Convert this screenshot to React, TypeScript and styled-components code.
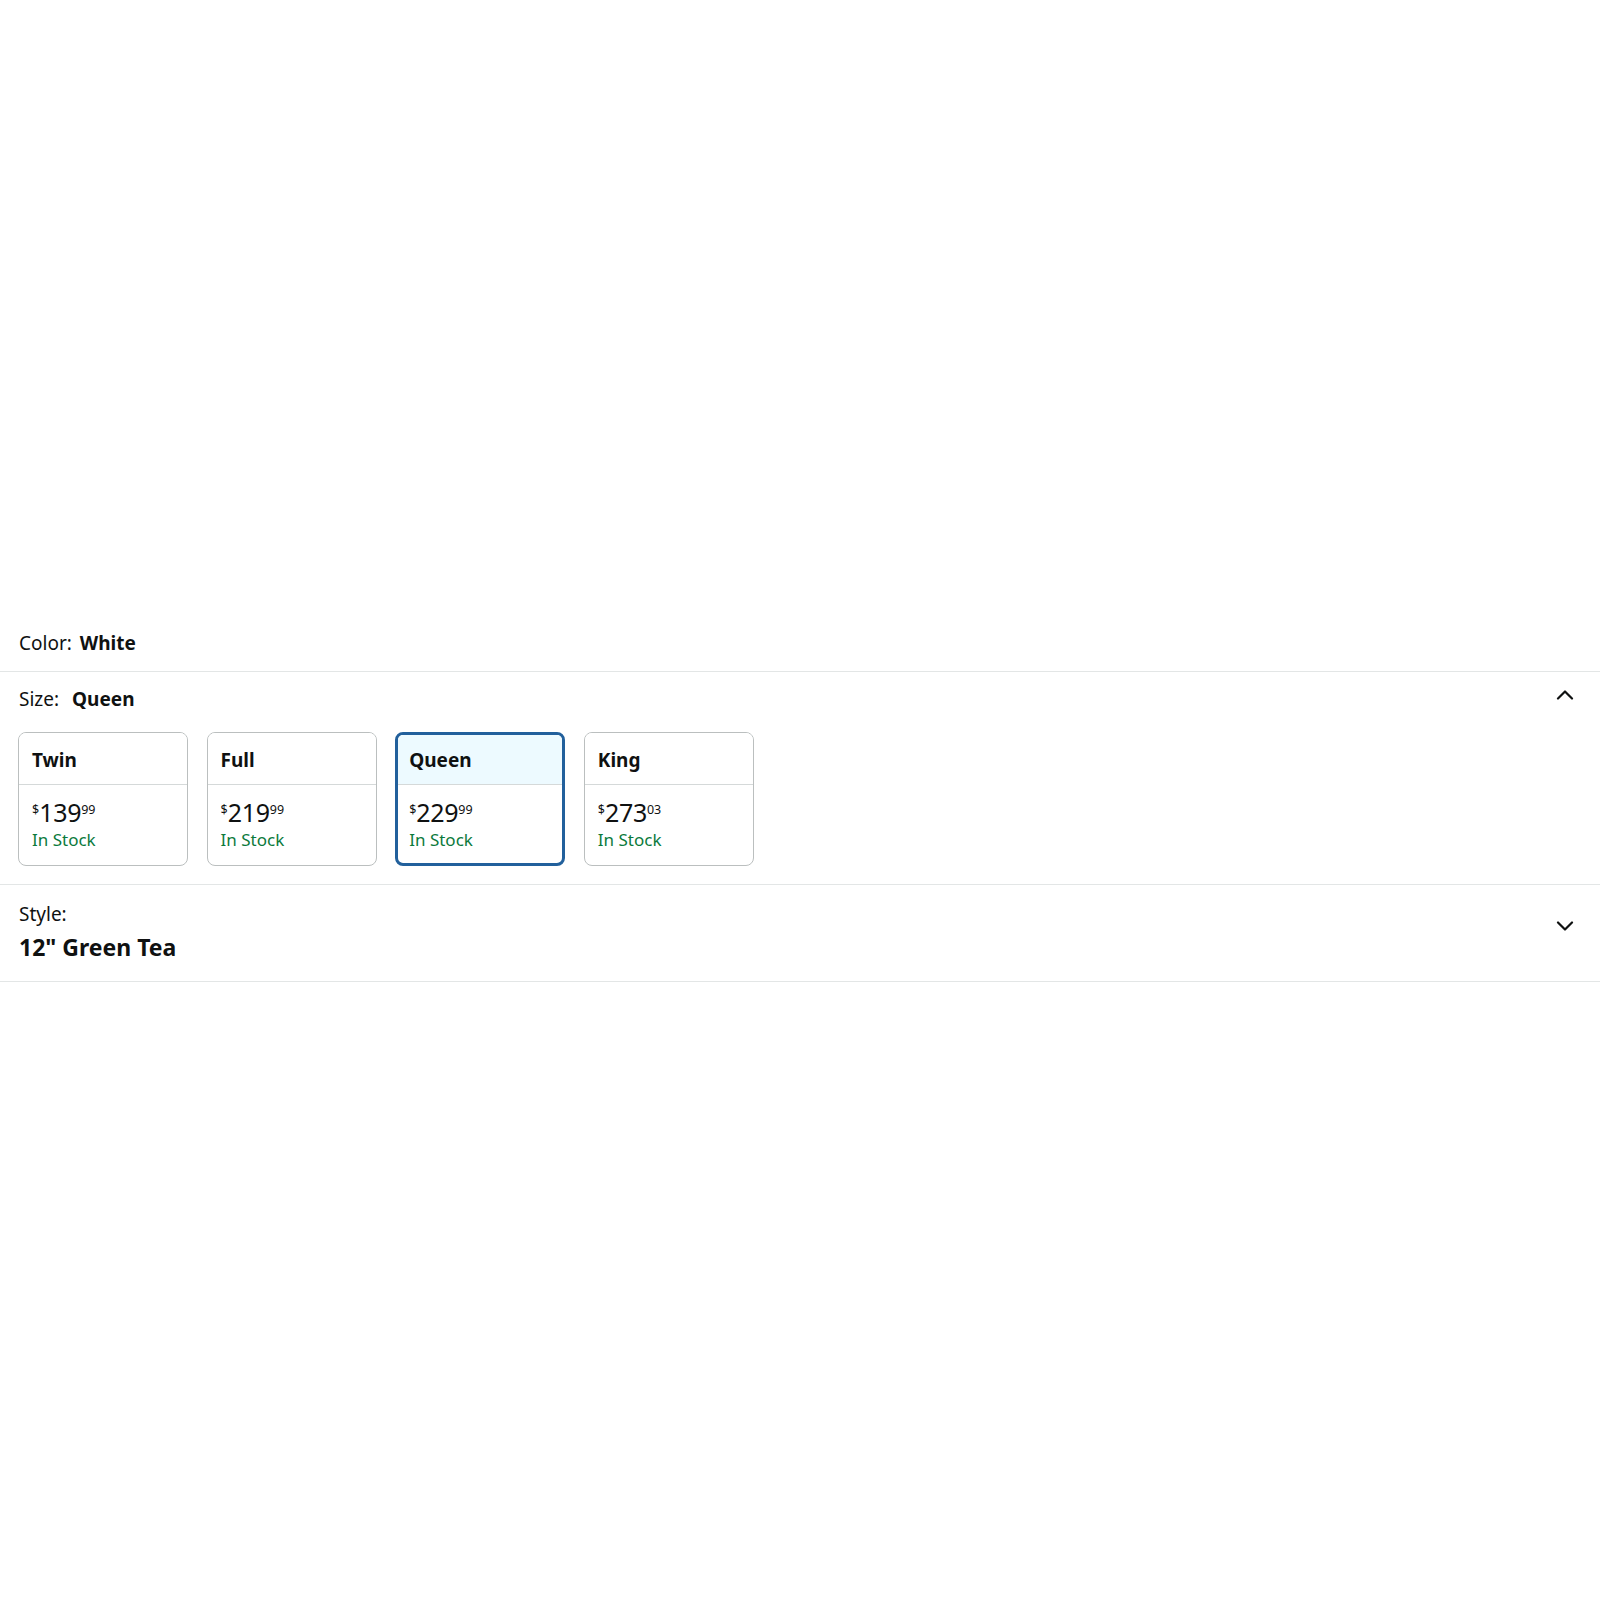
import React from "react"
import styled, { createGlobalStyle } from "styled-components"

const GlobalStyle = createGlobalStyle`
    html, body {
        margin:0;
        padding:0;
        background:#ffffff;
    }
    body {
        font-family:"Noto Sans", "Liberation Sans", sans-serif;
        color:#0f1111;
    }
`

interface SizeOption {
    name:string;
    whole:string;
    fraction:string;
    stock:string;
}

const sizes:Array<SizeOption> = [
    {name:"Twin", whole:"139", fraction:"99", stock:"In Stock"},
    {name:"Full", whole:"219", fraction:"99", stock:"In Stock"},
    {name:"Queen", whole:"229", fraction:"99", stock:"In Stock"},
    {name:"King", whole:"273", fraction:"03", stock:"In Stock"},
]

const Chevron = ({up}:{up:boolean}) => (
    <svg width="18" height="11" viewBox="0 0 18 11" fill="none">
        <path
            d={up ? "M2 9.5 L9 2.5 L16 9.5" : "M2 1.5 L9 8.5 L16 1.5"}
            stroke="#0f1111"
            strokeWidth="2.2"
            strokeLinecap="round"
            strokeLinejoin="round"
        />
    </svg>
)

const App = () => {
    const selected = "Queen"
    return(
        <>
            <GlobalStyle/>
            <Page>
                <ColorRow>
                    <Label>Color:</Label>
                    <Value>White</Value>
                </ColorRow>
                <Section>
                    <SectionHeader>
                        <Line>
                            <Label>Size:</Label>
                            <Value gap={13}>{selected}</Value>
                        </Line>
                        <Toggle><Chevron up={true}/></Toggle>
                    </SectionHeader>
                    <Cards>
                        {sizes.map((size)=>{
                            const active = size.name === selected
                            return(
                                <Card key={size.name} $active={active}>
                                    <CardTitle $active={active}>{size.name}</CardTitle>
                                    <CardBody>
                                        <Price>
                                            <Sup>$</Sup>
                                            <Whole>{size.whole}</Whole>
                                            <Sup>{size.fraction}</Sup>
                                        </Price>
                                        <Stock>{size.stock}</Stock>
                                    </CardBody>
                                </Card>
                            )
                        })}
                    </Cards>
                </Section>
                <StyleSection>
                    <StyleText>
                        <Label>Style:</Label>
                        <StyleValue>12" Green Tea</StyleValue>
                    </StyleText>
                    <Toggle offset={17}><Chevron up={false}/></Toggle>
                </StyleSection>
            </Page>
        </>
    )
}

const Page = styled.div`
    display:flex;
    flex-direction:column;
    width:1600px;
    min-height:1600px;
    padding-top:627px;
    box-sizing:border-box;
`
const ColorRow = styled.div`
    display:flex;
    align-items:center;
    height:32px;
    padding:0 19px 12px;
    border-bottom:1px solid #e3e6e6;
`
const Label = styled.span`
    font-size:19px;
    line-height:26px;
    color:#0f1111;
`
const Value = styled.span<{gap?:number}>`
    font-size:19px;
    line-height:26px;
    font-weight:700;
    margin-left:${({gap}) => gap ?? 8}px;
`
const Section = styled.div`
    display:flex;
    flex-direction:column;
    padding:14px 23px 18px 18px;
    border-bottom:1px solid #e3e6e6;
`
const SectionHeader = styled.div`
    display:flex;
    justify-content:space-between;
    align-items:flex-start;
    height:26px;
    padding-left:1px;
`
const Line = styled.div`
    display:flex;
    align-items:center;
`
const Toggle = styled.div<{offset?:number}>`
    display:flex;
    align-items:center;
    justify-content:center;
    width:24px;
    height:16px;
    margin-top:${({offset}) => offset ?? 0}px;
`
const Cards = styled.div`
    display:flex;
    gap:18.6px;
    margin-top:20px;
`
const Card = styled.div<{$active:boolean}>`
    display:flex;
    flex-direction:column;
    width:170px;
    height:134px;
    box-sizing:border-box;
    border-radius:8px;
    overflow:hidden;
    border:${({$active}) => $active ? "3px solid #22609c" : "1px solid #bbbfbf"};
    padding:${({$active}) => $active ? "0" : "2px"};
    background:#ffffff;
`
const CardTitle = styled.div<{$active:boolean}>`
    display:flex;
    align-items:center;
    height:52px;
    margin:-2px -2px 0;
    padding:2px 14px 0 13px;
    box-sizing:border-box;
    border-bottom:1px solid #d5d9d9;
    background:${({$active}) => $active ? "#edfaff" : "#ffffff"};
    font-size:19px;
    font-weight:700;
    color:#0f1111;
`
const CardBody = styled.div`
    display:flex;
    flex-direction:column;
    padding:11px 11px 0 11px;
`
const Price = styled.div`
    display:flex;
    align-items:flex-start;
    height:32px;
    color:#0f1111;
`
const Sup = styled.span`
    font-size:12.5px;
    line-height:12px;
    margin-top:8px;
`
const Whole = styled.span`
    font-size:25px;
    line-height:32px;
    letter-spacing:-0.3px;
`
const Stock = styled.div`
    font-size:17px;
    line-height:24px;
    color:#0b7a3c;
`
const StyleSection = styled.div`
    display:flex;
    justify-content:space-between;
    align-items:flex-start;
    padding:16px 23px 18px 19px;
    border-bottom:1px solid #e3e6e6;
`
const StyleText = styled.div`
    display:flex;
    flex-direction:column;
`
const StyleValue = styled.div`
    font-size:23px;
    line-height:32px;
    font-weight:700;
    margin-top:4px;
`

export default App
